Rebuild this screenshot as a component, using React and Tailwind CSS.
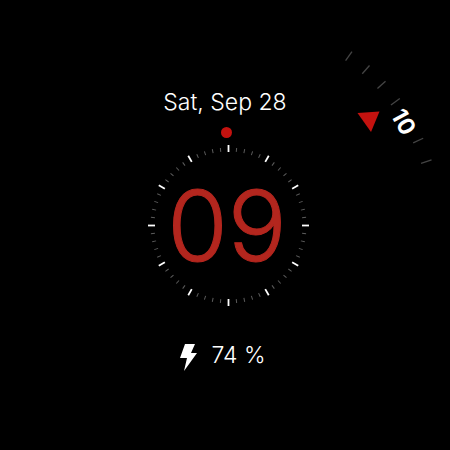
const MINUTE_MARKS = Array.from({ length: 60 }, (_, i) => i);
const OUTER_MARKS = [35.4, 41.4, 47.4, 53.4, 65.8, 72];

function Dial() {
  return (
    <svg viewBox="-81.5 -80.5 162 162" className="col-start-1 row-start-1 size-[162px] overflow-visible" aria-hidden="true">
      {MINUTE_MARKS.map((i) => {
        const major = i % 5 === 0;
        return (
          <line
            key={i}
            y1={major ? -80.5 : -78}
            y2={major ? -73.5 : -74}
            stroke={major ? "#ffffff" : "#5c5c5c"}
            strokeWidth={major ? 1.8 : 1}
            transform={`rotate(${i * 6})`}
          />
        );
      })}
    </svg>
  );
}

function OuterRing() {
  return (
    <svg
      viewBox="0 -220 220 220"
      className="pointer-events-none absolute bottom-1/2 left-1/2 size-[220px] max-w-none overflow-visible"
    >
      {OUTER_MARKS.map((a) => (
        <line key={a} y1={-214} y2={-203} stroke="#444444" strokeWidth={1.3} transform={`rotate(${a})`} />
      ))}
      <polygon points="129.5,-113 151.5,-114.5 143,-94" fill="#c4120f" />
      <text
        transform="translate(175.5 -104) rotate(61)"
        y={8}
        textAnchor="middle"
        className="fill-white text-[23px] font-bold"
      >
        10
      </text>
    </svg>
  );
}

export default function App() {
  return (
    <main className="flex min-h-screen flex-col items-center overflow-hidden bg-black pt-[86px] font-['Inter',sans-serif] font-light text-white">
      <p className="text-[23px] leading-8">Sat, Sep 28</p>
      <span className="mt-[9px] ml-0.5 size-[11px] rounded-full bg-[#c4120f]" />
      <section className="relative mt-[7px] ml-1.5 grid place-items-center">
        <Dial />
        <span className="col-start-1 row-start-1 pr-0.5 text-[98px] leading-none text-[#b3261e] [-webkit-text-stroke:1px_#b3261e]">
          09
        </span>
        <OuterRing />
      </section>
      <div className="mt-8 mr-1 flex items-center gap-3.5">
        <svg viewBox="0 0 17 27" className="mt-1 h-[27px] w-[17px]" fill="#ffffff" aria-hidden="true">
          <path d="M5 0H15L11 9H17L4 27L7 14H0Z" />
        </svg>
        <p className="text-[23px] leading-8">74 %</p>
      </div>
    </main>
  );
}
